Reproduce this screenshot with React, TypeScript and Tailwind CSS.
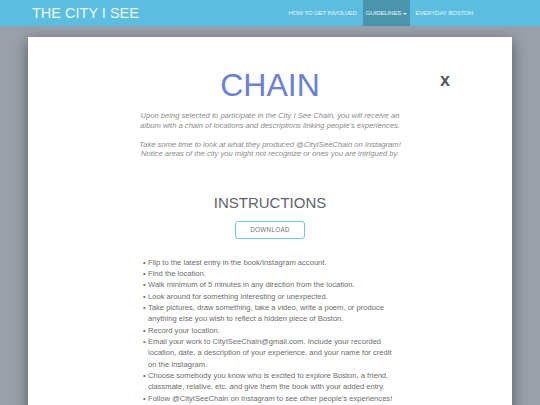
const steps: string[] = [
  "Flip to the latest entry in the book/Instagram account.",
  "Find the location.",
  "Walk minimum of 5 minutes in any direction from the location.",
  "Look around for something interesting or unexpected.",
  "Take pictures, draw something, take a video, write a poem, or produce anything else you wish to reflect a hidden piece of Boston.",
  "Record your location.",
  "Email your work to CityISeeChain@gmail.com. Include your recorded location, date, a description of your experience, and your name for credit on the Instagram.",
  "Choose somebody you know who is excited to explore Boston, a friend, classmate, relative, etc. and give them the book with your added entry.",
  "Follow @CityISeeChain on Instagram to see other people's experiences!",
];

export default function App() {
  return (
    <div className="h-[405px] w-[540px] overflow-hidden bg-[#9aa0a9] font-['Liberation_Sans',Arial,sans-serif]">
      <nav className="flex h-[26px] items-stretch bg-[#5bbde0]">
        <div className="flex items-center pl-[32px] text-[14.5px] leading-none text-[#eef9fc]">
          THE CITY I SEE
        </div>
        <div className="ml-auto flex items-stretch pr-[67px] text-[6.2px] tracking-[-0.2px] text-[#e6f6fb]">
          <a className="flex items-center px-[6px]">HOW TO GET INVOLVED</a>
          <a className="flex items-center gap-[2px] bg-[#4a95ad] px-[3px]">
            GUIDELINES
            <span className="mt-[1px] inline-block h-0 w-0 border-x-[2px] border-t-[2.5px] border-x-transparent border-t-[#e6f6fb]" />
          </a>
          <a className="flex items-center pl-[5px]">EVERYDAY BOSTON</a>
        </div>
      </nav>

      <div className="relative mx-[28px] mt-[11px] h-[400px] bg-white shadow-[0_4px_14px_rgba(0,0,0,0.45)]">
        <button className="absolute right-[62px] top-[34px] text-[18px] font-bold leading-none text-[#555a60]">
          x
        </button>

        <div className="flex flex-col items-center pt-[32px]">
          <h1 className="text-[32px] leading-none text-[#6b80d8]">CHAIN</h1>

          <div className="mt-[10px] text-center text-[7.6px] italic leading-[9.5px] text-[#8a8a8a]">
            <p>
              Upon being selected to participate in the City I See Chain, you will receive an
              <br />
              album with a chain of locations and descriptions linking people's experiences.
            </p>
            <p className="mt-[9.5px]">
              Take some time to look at what they produced @CityISeeChain on Instagram!
              <br />
              Notice areas of the city you might not recognize or ones you are intrigued by.
            </p>
          </div>

          <h2 className="mt-[36px] text-[15px] leading-none text-[#5f6268]">
            INSTRUCTIONS
          </h2>

          <button className="mt-[11px] h-[18px] w-[70px] rounded-[3px] border border-[#6ccbd0] text-[6.3px] tracking-[0.3px] text-[#6f7377]">
            DOWNLOAD
          </button>

          <ul className="mt-[18px] w-[254px] text-[7.6px] leading-[11.35px] text-[#6c6c6c]">
            {steps.map((s) => (
              <li key={s} className="relative pl-[5px]">
                <span className="absolute left-0 top-0">•</span>
                {s}
              </li>
            ))}
          </ul>
        </div>
      </div>
    </div>
  );
}
